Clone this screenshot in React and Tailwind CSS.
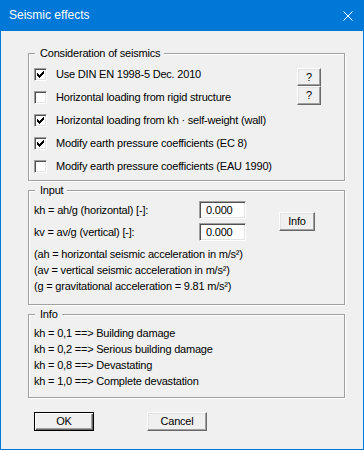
import React from "react";

const raised =
  "border border-t-white border-l-white border-b-[#696969] border-r-[#696969] shadow-[inset_-1px_-1px_0_#a0a0a0,inset_1px_1px_0_#e3e3e3] bg-[#f0f0f0]";
const sunken =
  "border border-t-[#a0a0a0] border-l-[#a0a0a0] border-b-white border-r-white shadow-[inset_1px_1px_0_#505050,inset_-1px_-1px_0_#e3e3e3] bg-white";
const groupBox =
  "border border-[#a0a0a0] shadow-[inset_1px_1px_0_#fff,1px_1px_0_#fff] ml-[27px] w-[317px]";

const Legend = ({ children }) => (
  <div className="-mt-[7px] ml-[6px] w-fit bg-[#f0f0f0] pl-[5px] pr-[4px] leading-[13px]">
    {children}
  </div>
);

const CheckBox = ({ checked }) => (
  <div className={`w-[13px] h-[13px] shrink-0 ${sunken}`}>
    {checked && (
      <svg width="9" height="9" viewBox="0 0 9 9" className="m-px block">
        <path
          d="M1 3h1v3H1zM2 4h1v3H2zM3 5h1v3H3zM4 4h1v3H4zM5 3h1v3H5zM6 2h1v3H6zM7 1h1v3H7z"
          fill="#000"
        />
      </svg>
    )}
  </div>
);

const options = [
  { label: "Use DIN EN 1998-5 Dec. 2010", checked: true },
  { label: "Horizontal loading from rigid structure", checked: false },
  { label: "Horizontal loading from kh \u00b7 self-weight (wall)", checked: true },
  { label: "Modify earth pressure coefficients (EC 8)", checked: true },
  { label: "Modify earth pressure coefficients (EAU 1990)", checked: false },
];

const infoLines = [
  "kh = 0,1 ==> Building damage",
  "kh = 0,2 ==> Serious building damage",
  "kh = 0,8 ==> Devastating",
  "kh = 1,0 ==> Complete devastation",
];

export default function App() {
  return (
    <div className="w-[364px] h-[450px] bg-[#0078d7] px-px pb-px flex flex-col font-['Liberation_Sans',Arial,sans-serif] text-[11px] text-black">
      {/* Title bar */}
      <div className="h-[31px] shrink-0 flex items-center justify-between pl-[8px] pr-[10px] text-white text-[12px]">
        <span className="-mt-px">Seismic effects</span>
        <svg width="10" height="10" viewBox="0 0 10 10">
          <path d="M0.5 0.5L9.5 9.5M9.5 0.5L0.5 9.5" stroke="#fff" strokeWidth="1" />
        </svg>
      </div>

      {/* Body */}
      <div className="flex-1 bg-[#f0f0f0] flex flex-col tracking-[-0.2px]">
        {/* Consideration of seismics */}
        <div className={`${groupBox} mt-[22px] h-[128px]`}>
          <Legend>Consideration of seismics</Legend>
          <div className="flex mt-[3px] pl-[5px]">
            <div className="flex-1 flex flex-col">
              {options.map((o) => (
                <div key={o.label} className="h-[23px] flex items-center">
                  <CheckBox checked={o.checked} />
                  <span className="ml-[9px]">{o.label}</span>
                </div>
              ))}
            </div>
            <div className="flex flex-col mt-[5px] mr-[23px]">
              <button className={`w-[24px] h-[18px] leading-none ${raised}`}>?</button>
              <button className={`w-[24px] h-[19px] leading-none ${raised}`}>?</button>
            </div>
          </div>
        </div>

        {/* Input */}
        <div className={`${groupBox} mt-[9px] h-[115px]`}>
          <Legend>Input</Legend>
          <div className="flex items-center mt-[4px] pl-[5px]">
            <div className="flex flex-col gap-[4px]">
              <div className="flex items-center h-[18px]">
                <span className="w-[165px]">kh = ah/g (horizontal) [-]:</span>
                <div className={`w-[47px] h-[18px] flex items-center pl-[6px] ${sunken}`}>0.000</div>
              </div>
              <div className="flex items-center h-[18px]">
                <span className="w-[165px]">kv = av/g (vertical) [-]:</span>
                <div className={`w-[47px] h-[18px] flex items-center pl-[6px] ${sunken}`}>0.000</div>
              </div>
            </div>
            <button className={`ml-[33px] w-[36px] h-[19px] leading-none ${raised}`}>Info</button>
          </div>
          <div className="mt-[5px] pl-[5px] leading-[16px]">
            <p>(ah = horizontal seismic acceleration in m/s²)</p>
            <p>(av = vertical seismic acceleration in m/s²)</p>
            <p>(g = gravitational acceleration = 9.81 m/s²)</p>
          </div>
        </div>

        {/* Info */}
        <div className={`${groupBox} mt-[9px] h-[84px]`}>
          <Legend>Info</Legend>
          <div className="mt-[4px] pl-[5px] leading-[16px]">
            {infoLines.map((l) => (
              <p key={l}>{l}</p>
            ))}
          </div>
        </div>

        {/* Buttons */}
        <div className="flex mt-[14px] ml-[33px] gap-[53px]">
          <button className="w-[60px] h-[19px] border border-black shadow-[inset_1px_1px_0_#fff,inset_-1px_-1px_0_#696969,inset_-2px_-2px_0_#a0a0a0] bg-[#f0f0f0] leading-none">
            OK
          </button>
          <button className={`w-[60px] h-[19px] leading-none ${raised}`}>Cancel</button>
        </div>
      </div>
    </div>
  );
}
